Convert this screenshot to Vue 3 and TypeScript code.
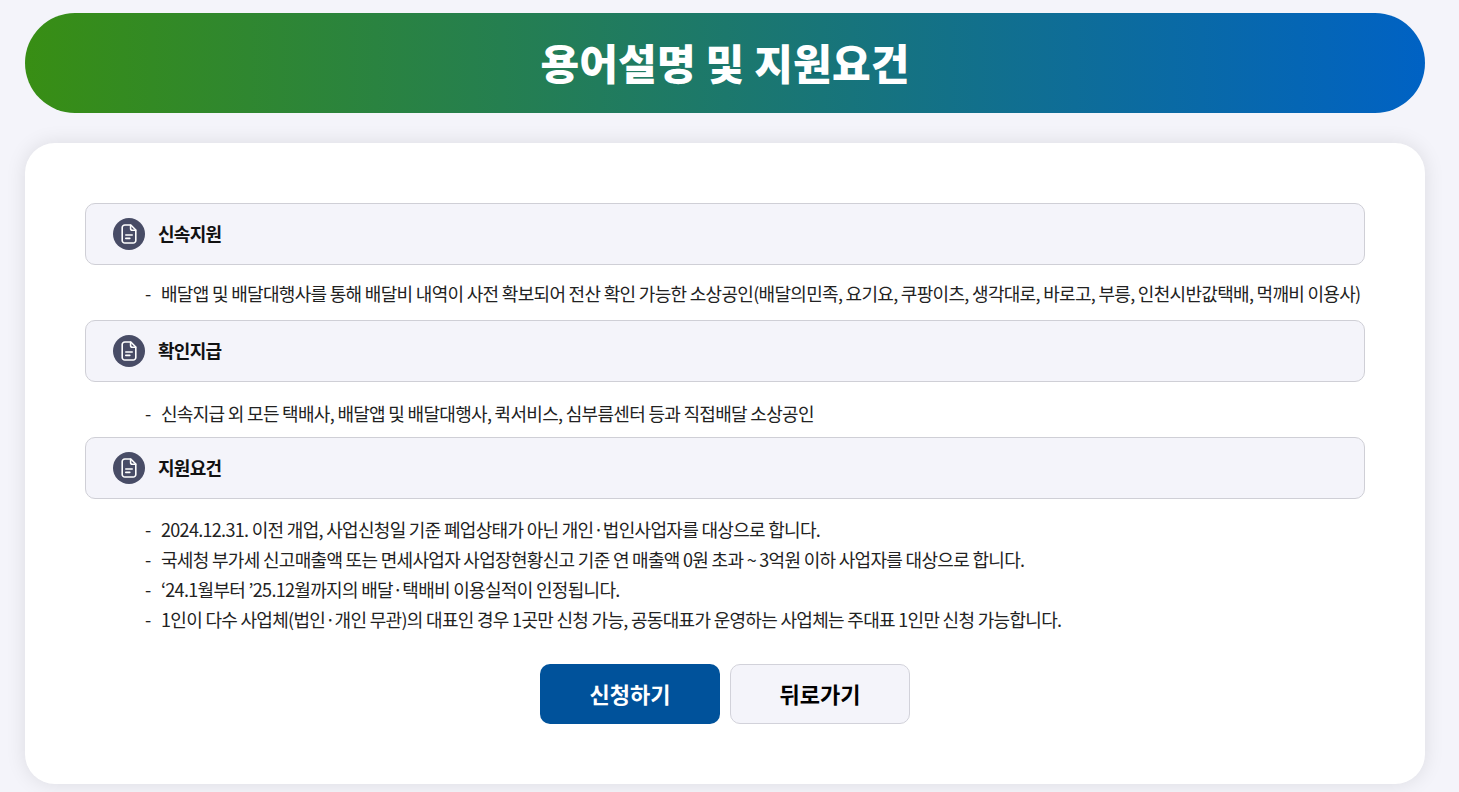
<script setup lang="ts">
interface Section { title: string; lines: string[]; cls: string }
const sections: Section[] = [
  { title: '신속지원', cls: 'a', lines: ['배달앱 및 배달대행사를 통해 배달비 내역이 사전 확보되어 전산 확인 가능한 소상공인(배달의민족, 요기요, 쿠팡이츠, 생각대로, 바로고, 부릉, 인천시반값택배, 먹깨비 이용사)'] },
  { title: '확인지급', cls: 'b', lines: ['신속지급 외 모든 택배사, 배달앱 및 배달대행사, 퀵서비스, 심부름센터 등과 직접배달 소상공인'] },
  { title: '지원요건', cls: 'c', lines: [
    '2024.12.31. 이전 개업, 사업신청일 기준 폐업상태가 아닌 개인·법인사업자를 대상으로 합니다.',
    '국세청 부가세 신고매출액 또는 면세사업자 사업장현황신고 기준 연 매출액 0원 초과 ~ 3억원 이하 사업자를 대상으로 합니다.',
    '‘24.1월부터 ’25.12월까지의 배달·택배비 이용실적이 인정됩니다.',
    '1인이 다수 사업체(법인·개인 무관)의 대표인 경우 1곳만 신청 가능, 공동대표가 운영하는 사업체는 주대표 1인만 신청 가능합니다.'
  ] }
]
</script>

<template>
  <div class="page">
    <header class="banner"><h1>용어설명 및 지원요건</h1></header>
    <main class="card">
      <section v-for="s in sections" :key="s.title" :class="['sec', s.cls]">
        <div class="head">
          <span class="ico">
            <svg width="24" height="24" viewBox="0 0 24 24" fill="none" stroke="#fff" stroke-width="1.6" stroke-linejoin="round" stroke-linecap="round">
              <path d="M7.8 3h6l5 5v10.4a2.6 2.6 0 0 1-2.6 2.6H7.8a2.6 2.6 0 0 1-2.6-2.6V5.6A2.6 2.6 0 0 1 7.8 3z" />
              <path d="M13.6 3.2v3.2a1.8 1.8 0 0 0 1.8 1.8h3.2" />
              <path d="M8.8 13h6.4M8.8 16.4h4" />
            </svg>
          </span>
          <h2>{{ s.title }}</h2>
        </div>
        <ul>
          <li v-for="l in s.lines" :key="l"><span class="dash">-</span><span>{{ l }}</span></li>
        </ul>
      </section>
      <div class="btns">
        <button class="primary" type="button">신청하기</button>
        <button class="ghost" type="button">뒤로가기</button>
      </div>
    </main>
  </div>
</template>

<style>
html, body { margin: 0; background: #f4f4fa; }
</style>

<style scoped>
.page {
  box-sizing: border-box;
  width: 1459px;
  height: 792px;
  overflow: hidden;
  padding: 13px 34px 8px 25px;
  font-family: "Noto Sans CJK KR", "Noto Sans", sans-serif;
  background: #f4f4fa;
}
.banner {
  margin: 0 0 30px;
  height: 100px;
  border-radius: 50px;
  display: flex;
  align-items: center;
  justify-content: center;
  background: linear-gradient(90deg, #388e14, #0062c4);
}
.banner h1 {
  margin: -4px 0 0;
  color: #fff;
  font-size: 42px;
  font-weight: 800;
  letter-spacing: 0.2px;
}
.card {
  box-sizing: border-box;
  height: 641px;
  background: #fff;
  border-radius: 30px;
  padding: 60px;
  box-shadow: 0 0 20px rgba(0, 0, 0, 0.1);
}
.head {
  box-sizing: border-box;
  height: 62px;
  display: flex;
  align-items: center;
  gap: 13px;
  padding-left: 27px;
  background: #f4f4fa;
  border: 1px solid #cfcfd6;
  border-radius: 10px;
}
.ico {
  width: 32px;
  height: 32px;
  border-radius: 50%;
  background: #484c66;
  display: flex;
  align-items: center;
  justify-content: center;
}
.head h2 {
  margin: -2px 0 0;
  font-size: 18px;
  font-weight: 700;
  letter-spacing: -0.7px;
  color: #111;
}
ul {
  list-style: none;
  margin: 0;
  padding: 13px 0 12px 60px;
}
.b ul { padding: 16px 0 9px 60px; }
.c ul { padding: 15px 0 0 60px; }
li {
  display: flex;
  height: 30px;
  line-height: 30px;
  font-size: 18px;
  letter-spacing: -0.69px;
  color: #222;
  white-space: nowrap;
}
.dash { width: 16px; flex: none; }
.btns {
  display: flex;
  justify-content: center;
  gap: 10px;
  margin-top: 30px;
}
.btns button {
  box-sizing: border-box;
  width: 180px;
  height: 60px;
  border-radius: 10px;
  padding: 0 0 2px;
  font: 700 22px "Noto Sans CJK KR", sans-serif;
  letter-spacing: 0;
}
.primary { background: #00529b; color: #fff; border: 0; }
.ghost { background: #f4f4fa; color: #000; border: 1px solid #d2d2da; }
</style>
